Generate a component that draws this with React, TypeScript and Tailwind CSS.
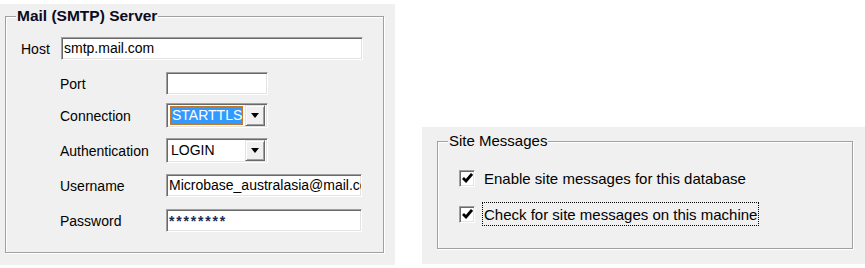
import type { ReactNode } from 'react';

const sunken =
  'border border-t-[#a0a0a0] border-l-[#a0a0a0] border-r-white border-b-white shadow-[inset_1px_1px_0_#696969,inset_-1px_-1px_0_#e3e3e3]';

function TextBox({ width, children }: { width: string; children?: ReactNode }) {
  return (
    <div className={`${width} h-[23px] bg-white ${sunken} flex items-center pl-[2px] overflow-hidden whitespace-nowrap`}>
      {children}
    </div>
  );
}

function Combo({ value, focused }: { value: string; focused?: boolean }) {
  return (
    <div className={`w-[102px] h-[25px] bg-white ${sunken} flex items-center pl-[3px] pr-[2px] gap-[2px]`}>
      <div
        className={
          focused
            ? 'flex-1 h-[19px] bg-[#3399ff] text-white border border-dotted border-[#c07a2a] flex items-center pl-[1px]'
            : 'flex-1 h-[19px] flex items-center pl-[1px]'
        }
      >
        {value}
      </div>
      <div className="w-[20px] h-[21px] bg-[#f0f0f0] border border-t-[#e3e3e3] border-l-[#e3e3e3] border-r-[#696969] border-b-[#696969] shadow-[inset_1px_1px_0_#fff,inset_-1px_-1px_0_#a0a0a0] flex items-center justify-center">
        <svg width="8" height="5" viewBox="0 0 8 5">
          <path d="M0 0H8L4 5Z" fill="#000" />
        </svg>
      </div>
    </div>
  );
}

function Field({ label, children, className }: { label: string; children: ReactNode; className: string }) {
  return (
    <div className={`flex items-center pl-[54px] ${className}`}>
      <span className="w-[106px] pt-[2px]">{label}</span>
      {children}
    </div>
  );
}

function CheckBox() {
  return (
    <div className={`w-[16px] h-[17px] bg-white ${sunken} flex items-center justify-center`}>
      <svg width="11" height="10" viewBox="0 0 11 10">
        <path d="M1 5L4 8L10 1" stroke="#000" strokeWidth="2.8" fill="none" />
      </svg>
    </div>
  );
}

export default function App() {
  return (
    <div className="w-[865px] h-[268px] bg-white flex items-start font-['Liberation_Sans',Arial,sans-serif] text-black">
      {/* Mail server panel */}
      <div className="mt-[4px] w-[395px] h-[261px] bg-[#f0f0f0] pt-[3px] pl-[5px] text-[14px]">
        <fieldset className="w-[379px] h-[246px] border border-[#a0a0a0] shadow-[1px_1px_0_#fff,inset_1px_1px_0_#fff]">
          <legend className="ml-[10px] px-[1px] bg-[#f0f0f0] font-bold text-[15.5px] leading-[18px] text-[#0a0a20]">
            Mail (SMTP) Server
          </legend>

          <div className="flex flex-col">
            <div className="flex items-center pl-[15px] mt-[12px]">
              <span className="w-[40px] pt-[2px]">Host</span>
              <TextBox width="w-[302px]">smtp.mail.com</TextBox>
            </div>
            <Field label="Port" className="mt-[12px]">
              <TextBox width="w-[102px]" />
            </Field>
            <Field label="Connection" className="mt-[8px]">
              <Combo value="STARTTLS" focused />
            </Field>
            <Field label="Authentication" className="mt-[10px]">
              <Combo value="LOGIN" />
            </Field>
            <Field label="Username" className="mt-[11px]">
              <TextBox width="w-[196px]">Microbase_australasia@mail.com</TextBox>
            </Field>
            <Field label="Password" className="mt-[12px]">
              <TextBox width="w-[196px]">
                <span className="text-[14px] font-bold tracking-[1.8px] text-[#1a2a50] pt-[1px]">********</span>
              </TextBox>
            </Field>
          </div>
        </fieldset>
      </div>

      {/* Site messages panel */}
      <div className="ml-[27px] mt-[127px] w-[443px] h-[137px] bg-[#f0f0f0] pt-[5px] pl-[15px] text-[15px]">
        <fieldset className="w-[416px] h-[117px] border border-[#a0a0a0] shadow-[1px_1px_0_#fff,inset_1px_1px_0_#fff]">
          <legend className="ml-[10px] px-[1px] bg-[#f0f0f0] leading-[18px]">Site Messages</legend>

          <div className="flex flex-col pl-[21px]">
            <div className="flex items-center h-[24px] mt-[16px] gap-[7px]">
              <CheckBox />
              <span className="px-[1px] border border-transparent pt-[2px]">Enable site messages for this database</span>
            </div>
            <div className="flex items-center h-[24px] mt-[12px] gap-[7px]">
              <CheckBox />
              <span className="px-[1px] h-[24px] flex items-center border border-dotted border-black pt-[2px]">
                Check for site messages on this machine
              </span>
            </div>
          </div>
        </fieldset>
      </div>
    </div>
  );
}
